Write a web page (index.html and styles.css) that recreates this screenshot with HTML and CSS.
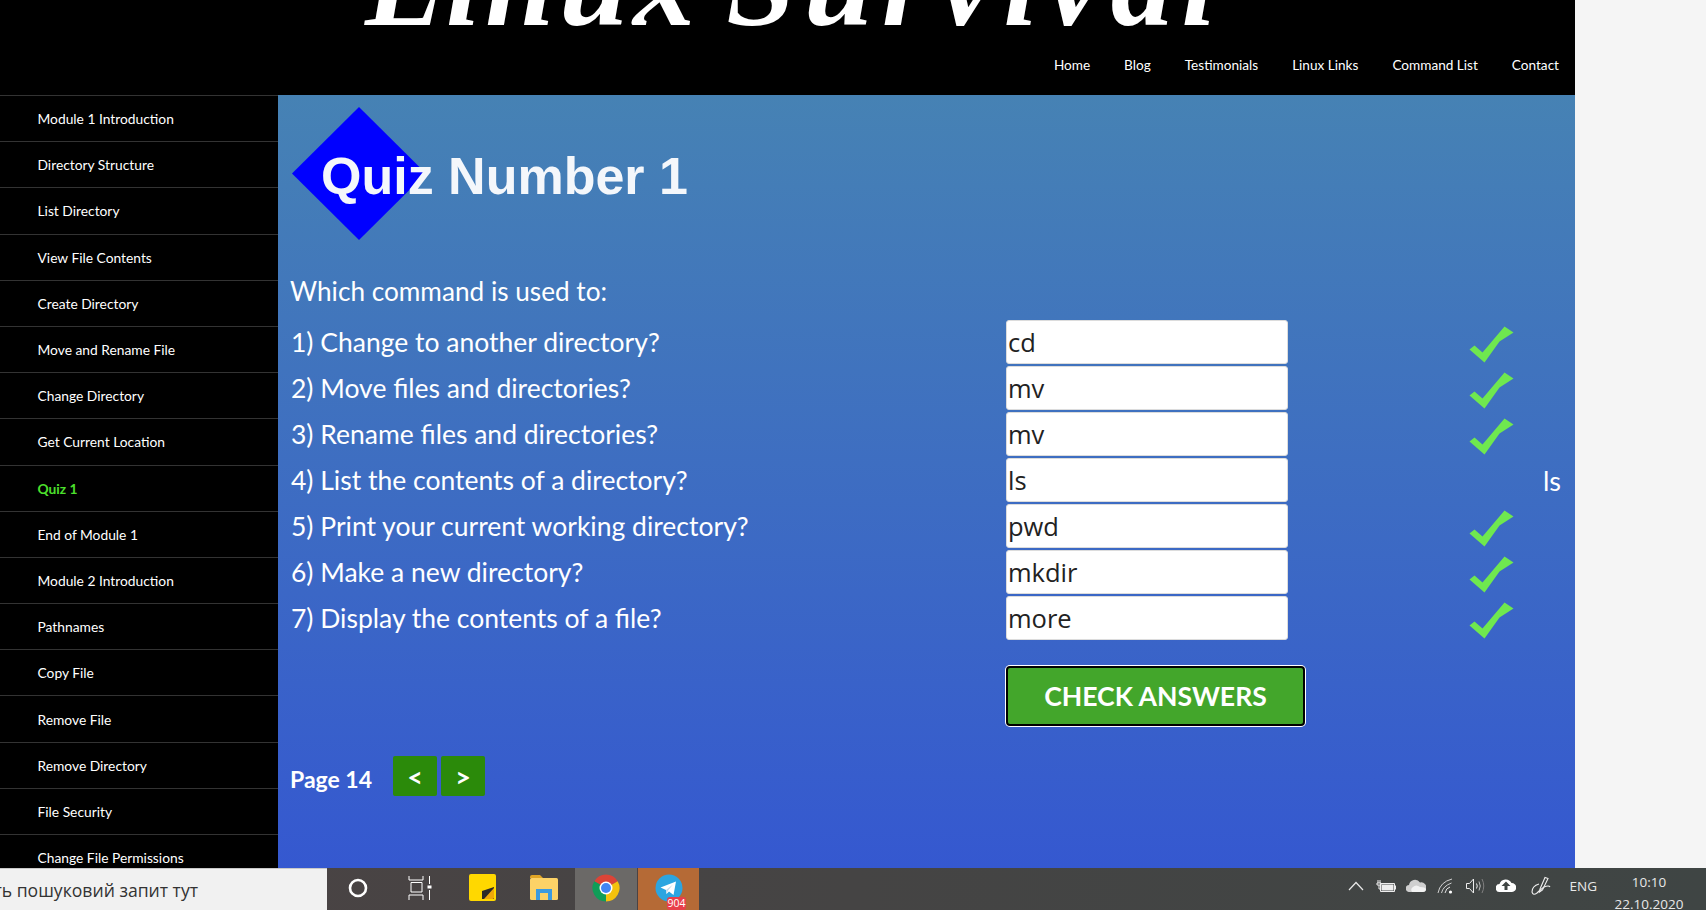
FILE: index.html
```html
<!DOCTYPE html>
<html lang="en">
<head>
    <meta charset="UTF-8">
    <meta name="viewport" content="width=device-width, initial-scale=1.0">
    <title>Linux Survival - Quiz 1</title>
    <link rel="stylesheet" href="styles.css">
</head>
<body>
    <svg class="icon-defs" width="0" height="0">
        <symbol id="tick" viewBox="0 0 45 37">
            <polygon points="0.5,23.5 5.5,19.5 13.5,26.5 35.5,0.5 44.5,6.5 30.5,15.5 15.5,36.5" fill="#6fe84f"/>
        </symbol>
    </svg>

    <div class="site">
        <header class="site-header">
            <h1 class="site-title">Linux <span class="title-wide">Survival</span></h1>
            <nav class="top-nav">
                <a href="#">Home</a>
                <a href="#">Blog</a>
                <a href="#">Testimonials</a>
                <a href="#">Linux Links</a>
                <a href="#">Command List</a>
                <a href="#">Contact</a>
            </nav>
        </header>

        <div class="columns">
            <ul class="side-menu">
                <li><a href="#">Module 1 Introduction</a></li>
                <li><a href="#">Directory Structure</a></li>
                <li><a href="#">List Directory</a></li>
                <li><a href="#">View File Contents</a></li>
                <li><a href="#">Create Directory</a></li>
                <li><a href="#">Move and Rename File</a></li>
                <li><a href="#">Change Directory</a></li>
                <li><a href="#">Get Current Location</a></li>
                <li><a href="#" class="current">Quiz 1</a></li>
                <li><a href="#">End of Module 1</a></li>
                <li><a href="#">Module 2 Introduction</a></li>
                <li><a href="#">Pathnames</a></li>
                <li><a href="#">Copy File</a></li>
                <li><a href="#">Remove File</a></li>
                <li><a href="#">Remove Directory</a></li>
                <li><a href="#">File Security</a></li>
                <li><a href="#">Change File Permissions</a></li>
            </ul>

            <main class="quiz">
                <div class="quiz-banner">
                    <div class="diamond"></div>
                    <h2>Quiz Number 1</h2>
                </div>

                <p class="quiz-intro">Which command is used to:</p>

                <form class="quiz-rows">
                    <label>1) Change to another directory?</label>
                    <input type="text" value="cd">
                    <svg class="tick"><use href="#tick"/></svg>
                    <span class="answer"></span>

                    <label>2) Move files and directories?</label>
                    <input type="text" value="mv">
                    <svg class="tick"><use href="#tick"/></svg>
                    <span class="answer"></span>

                    <label>3) Rename files and directories?</label>
                    <input type="text" value="mv">
                    <svg class="tick"><use href="#tick"/></svg>
                    <span class="answer"></span>

                    <label>4) List the contents of a directory?</label>
                    <input type="text" value="ls">
                    <span></span>
                    <span class="answer">ls</span>

                    <label>5) Print your current working directory?</label>
                    <input type="text" value="pwd">
                    <svg class="tick"><use href="#tick"/></svg>
                    <span class="answer"></span>

                    <label>6) Make a new directory?</label>
                    <input type="text" value="mkdir">
                    <svg class="tick"><use href="#tick"/></svg>
                    <span class="answer"></span>

                    <label>7) Display the contents of a file?</label>
                    <input type="text" value="more">
                    <svg class="tick"><use href="#tick"/></svg>
                    <span class="answer"></span>

                    <button type="button" class="check-btn">CHECK ANSWERS</button>
                </form>

                <div class="pager">
                    <span class="page-no">Page 14</span>
                    <a href="#" class="page-btn">&lt;</a>
                    <a href="#" class="page-btn">&gt;</a>
                </div>
            </main>
        </div>
    </div>

    <footer class="taskbar">
        <div class="search-box"><span>Введіть пошуковий запит тут</span></div>

        <div class="task-cell">
            <svg width="22" height="22" viewBox="0 0 22 22"><circle cx="11" cy="11" r="8" fill="none" stroke="#fff" stroke-width="2.6"/></svg>
        </div>
        <div class="task-cell">
            <svg width="24" height="24" viewBox="0 0 24 24" fill="none" stroke="#fff" stroke-width="1">
                <path d="M1 0V4H15V0M3 6.500H14V16H3ZM1 24V19H15V24M21.500 0V8M21.500 14V24"/>
                <rect x="19.500" y="9.500" width="4" height="3" fill="#fff" stroke="none"/>
            </svg>
        </div>
        <div class="task-cell">
            <svg width="27" height="27" viewBox="0 0 27 27">
                <rect width="27" height="27" rx="2" fill="#ffd800"/>
                <path d="M13 25V17L25 13V25Z" fill="#2b2a28"/>
                <path d="M15 25L25 14V23.500Q25 25 23.500 25Z" fill="#efa90a"/>
            </svg>
        </div>
        <div class="task-cell">
            <svg width="28" height="25" viewBox="0 0 28 25">
                <path d="M0 2Q0 0 2 0H10L13 3H0Z" fill="#e0a526"/>
                <rect y="3" width="28" height="22" rx="1.500" fill="#fcd267"/>
                <path d="M6 25V14H22V25H18V18H10V25Z" fill="#3c9be0"/>
            </svg>
        </div>
        <div class="task-cell chrome-cell">
            <svg width="28" height="28" viewBox="0 0 28 28">
                <path d="M14 14L2.300 7.250A13.500 13.500 0 0 1 25.700 7.250Z" fill="#db4437"/>
                <path d="M14 14L25.700 7.250A13.500 13.500 0 0 1 14 27.500Z" fill="#f4c20d"/>
                <path d="M14 14L14 27.500A13.500 13.500 0 0 1 2.300 7.250Z" fill="#109d58"/>
                <circle cx="14" cy="14" r="6.500" fill="#fff"/>
                <circle cx="14" cy="14" r="5" fill="#4285f4"/>
            </svg>
        </div>
        <div class="task-cell telegram-cell">
            <svg width="28" height="28" viewBox="0 0 28 28">
                <circle cx="14" cy="14" r="13.500" fill="#2ca5e0"/>
                <path d="M5.500 13.500L21 7.500L18.500 21L14 17.500L11.500 20L11 16Z" fill="#fff"/>
                <path d="M11 16L18 10.500L13 16.500L11.500 20Z" fill="#c8daea"/>
            </svg>
            <span class="badge">904</span>
        </div>

        <div class="tray">
            <div class="tray-cell">
                <svg width="16" height="10" viewBox="0 0 16 10" fill="none" stroke="#e8e8e8" stroke-width="1.200"><path d="M1 9L8 1.500L15 9"/></svg>
            </div>
            <div class="tray-cell">
                <svg width="20" height="14" viewBox="0 0 20 14" fill="none" stroke="#eee" stroke-width="1">
                    <path d="M4.500 4.500H18.500V12.500H4.500ZM2 1V4M4 1V4M1 4H5V6H1ZM3 6V10H4.500"/>
                    <rect x="5.500" y="5.500" width="12" height="6" fill="#eee" stroke="none"/>
                    <rect x="19" y="6.500" width="1" height="4" fill="#eee" stroke="none"/>
                </svg>
            </div>
            <div class="tray-cell">
                <svg width="20" height="13" viewBox="0 0 20 13">
                    <path d="M3.500 13A3.500 3.500 0 0 1 3 6A6 6 0 0 1 14 3.500A5 5 0 0 1 20 10Q20 13 16.500 13Z" fill="#cfcfcf"/>
                    <path d="M6 13Q4 10 7 8Q10 5 14 8Q19 8 20 10Q20 13 16.500 13Z" fill="#f2f2f2"/>
                </svg>
            </div>
            <div class="tray-cell">
                <svg width="17" height="16" viewBox="0 0 17 16" fill="none" stroke="#e4e4e4" stroke-width="1">
                    <path d="M1 15Q3 4 15 1M4.500 15Q6 8 14.500 5" stroke="#d0d0d0"/>
                    <path d="M8 15Q9 10 13 9"/>
                    <circle cx="13.500" cy="14" r="1.600" fill="#fff" stroke="none"/>
                </svg>
            </div>
            <div class="tray-cell">
                <svg width="20" height="16" viewBox="0 0 20 16" fill="none" stroke="#ececec" stroke-width="1">
                    <path d="M.5 5.500H3.500L7.500 1V15L3.500 10.500H.5Z"/>
                    <path d="M10.500 5.500Q12 8 10.500 10.500"/>
                    <path d="M13 3.500Q15.500 8 13 12.500" stroke="#bdbdbd"/>
                    <path d="M16 1Q19.500 8 16 15" stroke="#808080"/>
                </svg>
            </div>
            <div class="tray-cell">
                <svg width="20" height="13" viewBox="0 0 20 13">
                    <path d="M4 13A4 4 0 0 1 3.500 5A6.500 6.500 0 0 1 15.500 4A4.500 4.500 0 0 1 16 13Z" fill="#fff"/>
                    <path d="M10 2.500L14.500 7H11.500V11H8.500V7H5.500Z" fill="#3f4544"/>
                </svg>
            </div>
            <div class="tray-cell pen-cell">
                <svg width="20" height="20" viewBox="0 0 20 20" fill="none" stroke="#eee" stroke-width="1.100">
                    <path d="M9 13L14 1.500L17 2.500L11.500 14L8.500 16Z"/>
                    <path d="M8 8Q1 10 1 16Q2 20 6 17Q9 14 13 11Q18 9 19 11"/>
                </svg>
            </div>
            <span class="lang">ENG</span>
            <div class="clock">
                <span>10:10</span>
                <span>22.10.2020</span>
            </div>
        </div>
    </footer>
</body>
</html>
```
FILE: styles.css
```css
* {
    box-sizing: border-box;
}
body {
    font-family: 'Lato', sans-serif;
    margin: 0;
    padding: 0;
    height: 100vh;
    overflow: hidden;
    display: flex;
    flex-direction: column;
    background-color: #f5f5f5;
    color: #fff;
}
.icon-defs {
    position: absolute;
}
.site {
    width: 1575px;
    height: 868px;
    display: flex;
    flex-direction: column;
    flex: none;
}
.site-header {
    height: 95px;
    flex: none;
    background: #000;
    overflow: hidden;
}
.site-title {
    margin: -83px 0 0 365px;
    font-family: 'Liberation Serif', serif;
    font-style: italic;
    font-weight: bold;
    font-size: 124px;
    line-height: 133px;
    letter-spacing: 5px;
    word-spacing: -10px;
    white-space: nowrap;
    color: #fff;
}
.title-wide {
    letter-spacing: 9px;
}
.top-nav {
    display: flex;
    justify-content: flex-end;
    gap: 34px;
    padding-right: 16px;
    margin-top: 5px;
}
.top-nav a {
    color: #fff;
    text-decoration: none;
    font-size: 13.6px;
    line-height: 20px;
}
.columns {
    display: flex;
    flex: 1;
    min-height: 0;
}
.side-menu {
    list-style: none;
    margin: 0;
    padding: 0;
    width: 278px;
    flex: none;
    background: #000;
    overflow: hidden;
}
.side-menu li {
    height: 46.2px;
    border-top: 1px solid #333;
    display: flex;
    align-items: center;
    padding-left: 37.5px;
}
.side-menu a {
    color: #fff;
    text-decoration: none;
    font-size: 13.8px;
}
.side-menu a.current {
    color: #4ce02c;
    font-weight: bold;
}
.quiz {
    flex: 1;
    padding: 12px 14px 0 12px;
    background: linear-gradient(to bottom, #4682b4, #3558d0);
}
.quiz-banner {
    display: grid;
    height: 133px;
    align-items: center;
}
.diamond {
    grid-area: 1 / 1;
    width: 134px;
    height: 133px;
    margin-left: 2px;
    background: #0000ff;
    clip-path: polygon(50% 0, 100% 50%, 50% 100%, 0 50%);
}
.quiz-banner h2 {
    grid-area: 1 / 1;
    margin: 4px 0 0 31px;
    font-family: 'Liberation Sans', sans-serif;
    font-size: 52px;
    font-weight: bold;
    line-height: 60px;
    color: #f4f7fb;
    filter: blur(0.5px);
}
.quiz-intro {
    margin: 28px 0 0;
    font-size: 26.2px;
    line-height: 46px;
}
.quiz-rows {
    display: grid;
    grid-template-columns: 716px 282px 226px 1fr;
    grid-auto-rows: minmax(44px, auto);
    row-gap: 2px;
    margin-top: 6px;
    align-items: center;
}
.quiz-rows label {
    font-size: 26.5px;
    padding-left: 1px;
}
.quiz-rows input {
    width: 282px;
    height: 44px;
    margin: 0;
    padding: 0 1px;
    border: 1px solid #dcdcdc;
    border-radius: 3px;
    background: #fff;
    color: #222;
    font-family: 'Open Sans', sans-serif;
    font-size: 25.5px;
}
.tick {
    width: 45px;
    height: 37px;
    justify-self: end;
    margin-top: 4px;
}
.answer {
    justify-self: end;
    font-size: 27px;
}
.check-btn {
    grid-column: 2 / 4;
    width: 299px;
    height: 60px;
    margin: 24px 0 0 0;
    background: #43a62b;
    color: #fff;
    border: 2px solid #000;
    box-shadow: 0 0 0 1px #fff;
    border-radius: 4px;
    font-family: 'Lato', sans-serif;
    font-size: 26.6px;
    font-weight: bold;
}
.pager {
    display: flex;
    align-items: center;
    gap: 4px;
    margin-top: 30px;
}
.page-no {
    font-size: 23px;
    font-weight: bold;
    width: 99px;
    padding-top: 5px;
}
.page-btn {
    width: 44px;
    height: 40px;
    display: flex;
    align-items: center;
    justify-content: center;
    background: #2b8a0a;
    border-radius: 2px;
    color: #fff;
    text-decoration: none;
    font-size: 27px;
    font-weight: bold;
}
.taskbar {
    height: 42px;
    flex: none;
    display: flex;
    background: linear-gradient(to right, #4b4344, #3f4544);
    overflow: hidden;
}
.search-box {
    width: 327px;
    flex: none;
    display: flex;
    justify-content: flex-end;
    align-items: center;
    overflow: hidden;
    background: #f1f1f1;
    border-top: 1px solid #c9c9c9;
    padding-right: 129px;
    white-space: nowrap;
    color: #333;
    font-family: 'Open Sans', sans-serif;
    font-size: 17.6px;
}
.task-cell {
    width: 62px;
    flex: none;
    display: flex;
    align-items: center;
    justify-content: center;
    position: relative;
    padding-bottom: 3px;
}
.chrome-cell {
    background: #6b6967;
}
.telegram-cell {
    background: #b56a36;
    border-left: 1px solid #4b4344;
}
.badge {
    position: absolute;
    left: 29px;
    top: 29px;
    width: 19px;
    height: 13px;
    border-radius: 3px;
    background: #e8404a;
    color: #fff;
    font-family: 'Open Sans', sans-serif;
    font-size: 10.5px;
    line-height: 13px;
    text-align: center;
}
.tray {
    margin-left: auto;
    display: flex;
    align-items: center;
    padding-right: 23px;
    color: #e8e8e8;
    font-family: 'Open Sans', sans-serif;
}
.tray-cell {
    width: 30px;
    height: 100%;
    display: flex;
    align-items: center;
    justify-content: center;
    padding-bottom: 7px;
}
.pen-cell {
    margin-left: 5px;
}
.lang {
    margin-left: 14px;
    font-size: 13.5px;
    padding-bottom: 7px;
}
.clock {
    margin-left: 18px;
    width: 68px;
    height: 100%;
    display: flex;
    flex-direction: column;
    align-items: center;
    padding-top: 3px;
    font-size: 13.5px;
    line-height: 22px;
}
```
